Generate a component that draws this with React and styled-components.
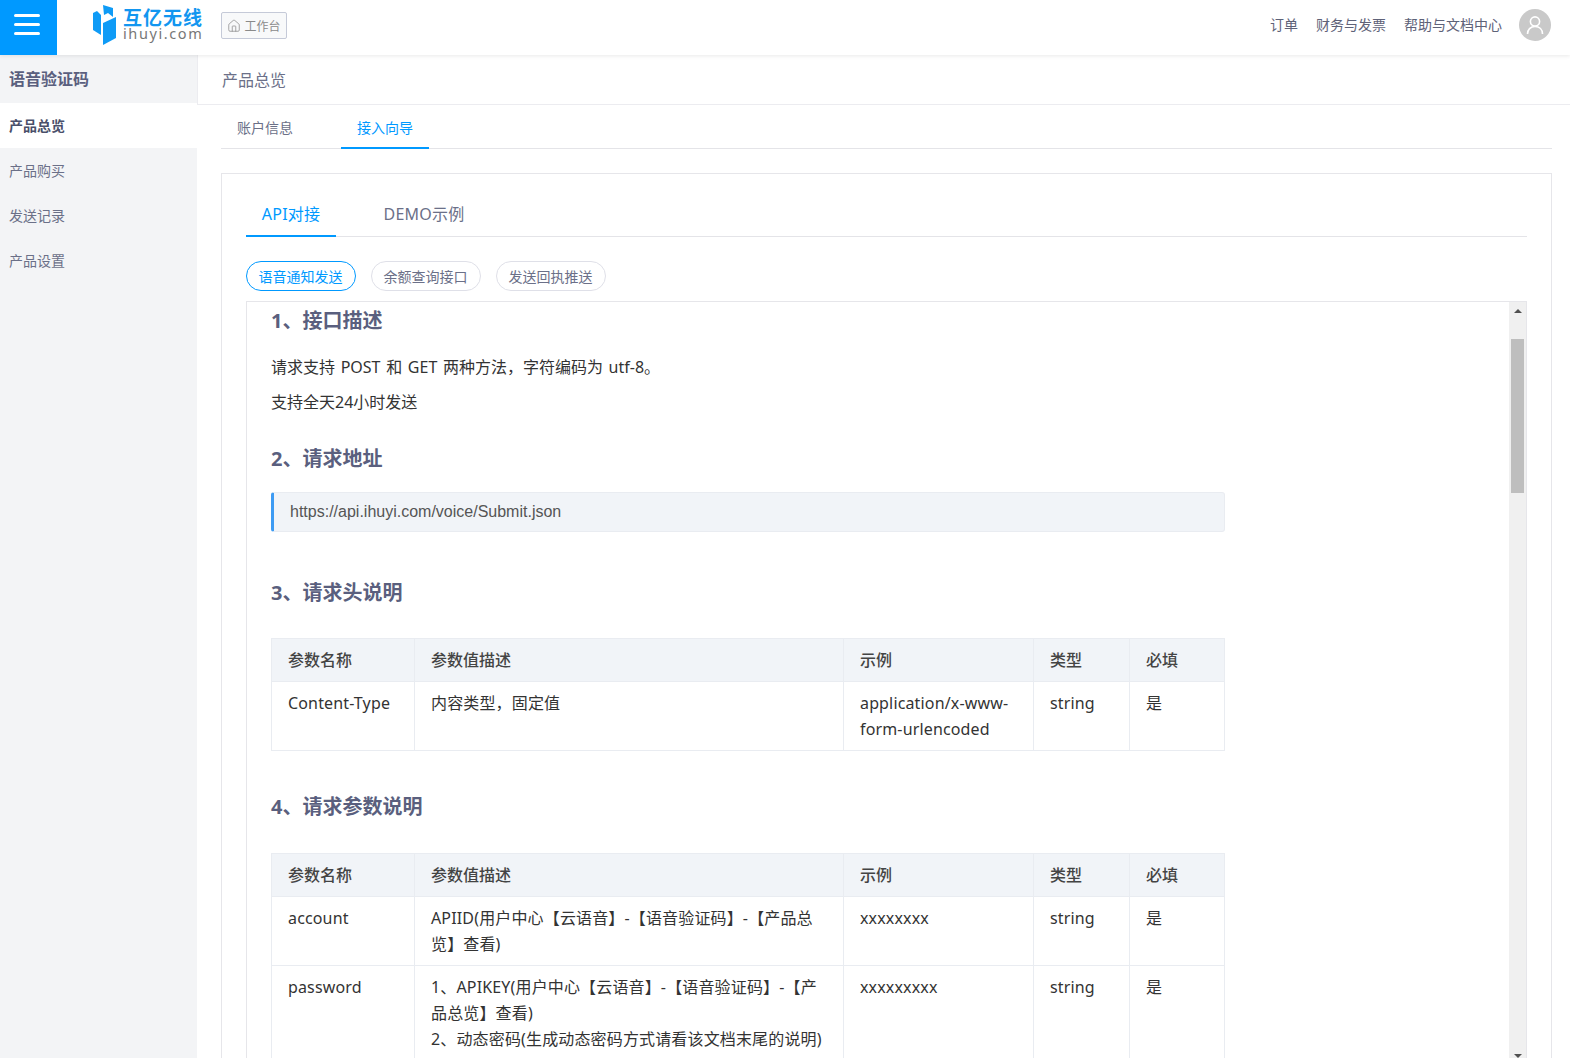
import React from 'react';
import styled, { createGlobalStyle } from 'styled-components';
import { Home } from 'lucide-react';

const Global = createGlobalStyle`
  html, body { margin: 0; padding: 0; height: 100%; overflow: hidden; background: #fff; }
  body { font-family: "Noto Sans", "Noto Sans CJK SC", sans-serif; color: #333; }
  * { box-sizing: border-box; }
`;
const Page = styled.div`width:1570px;height:1058px;display:flex;flex-direction:column;overflow:hidden;`;
const Header = styled.header`height:55px;flex:none;display:flex;align-items:flex-start;background:#fff;box-shadow:0 1px 4px rgba(0,0,0,.09);position:relative;z-index:2;`;
const MenuButton = styled.div`width:57px;height:55px;background:#0099ff;display:flex;flex-direction:column;justify-content:center;align-items:center;gap:6px;padding:0 3px 6px 0;`;
const MenuLine = styled.span`width:26px;height:3px;border-radius:2px;background:#fff;`;
const Logo = styled.div`display:flex;align-items:flex-start;margin-left:36px;width:128px;gap:7px;padding-top:5px;`;
const LogoWords = styled.div`display:flex;flex-direction:column;align-items:flex-start;padding-top:5px;`;
const LogoCn = styled.span`font-size:19px;line-height:16px;font-weight:700;color:#1296f0;letter-spacing:1px;white-space:nowrap;`;
const LogoEn = styled.span`font-family:"Noto Sans",sans-serif;font-size:14.5px;line-height:14px;color:#777;letter-spacing:1.6px;white-space:nowrap;`;
const WorkButton = styled.div`margin-top:12px;width:66px;height:27px;border:1px solid #c5cad8;border-radius:2px;background:#f8f9fa;display:flex;align-items:center;justify-content:center;gap:3px;font-size:12px;color:#8a8a8a;`;
const HeaderRight = styled.div`margin-left:auto;display:flex;align-items:center;padding:9px 19px 0 0;`;
const TopLink = styled.span`font-size:14px;color:#5e6278;padding-bottom:2px;margin-right:${p=>p.$last?17:18}px;white-space:nowrap;`;
const Avatar = styled.div`width:32px;height:32px;border-radius:50%;background:#c9c9c9;display:flex;align-items:center;justify-content:center;`;
const Body = styled.div`flex:1;min-height:0;display:flex;`;
const Sidebar = styled.aside`width:197px;flex:none;background:#f3f4f6;`;
const SideTitle = styled.div`height:48px;padding:0 0 3px 9px;display:flex;align-items:center;font-size:16px;font-weight:700;color:#5a5f7e;`;
const SideItem = styled.div`height:45px;padding:0 0 1px 9px;display:flex;align-items:center;font-size:14px;color:${p=>p.$active?'#4a4f6a':'#6b7088'};font-weight:${p=>p.$active?700:400};background:${p=>p.$active?'#fff':'transparent'};`;
const Main = styled.main`flex:1;min-width:0;display:flex;flex-direction:column;`;
const Crumb = styled.div`height:50px;flex:none;padding:0 0 2px 24px;display:flex;align-items:center;font-size:16px;color:#6b7088;border-bottom:1px solid #ececf0;border-left:1px solid #ececf0;`;
const TabBar = styled.div`margin:0 18px 0 24px;height:44px;flex:none;display:flex;border-bottom:1px solid #e4e4e8;`;
const TopTab = styled.div`width:${p=>p.$w}px;height:44px;padding-top:${p=>p.$active?2:0}px;display:flex;align-items:center;justify-content:center;font-size:14px;color:${p=>p.$active?'#0099ff':'#6b7088'};border-bottom:${p=>p.$active?'2px solid #0099ff':'none'};`;
const Card = styled.section`margin:24px 18px 0 24px;flex:1;min-height:0;border:1px solid #e6e6ea;border-bottom:none;padding:16px 24px 0;display:flex;flex-direction:column;`;
const DocTabs = styled.div`height:47px;flex:none;display:flex;border-bottom:1px solid #e4e4e8;`;
const DocTab = styled.div`width:${p=>p.$w}px;margin-right:${p=>p.$gap||0}px;height:47px;padding-bottom:${p=>p.$active?0:2}px;letter-spacing:.2px;display:flex;align-items:center;justify-content:center;font-size:16px;color:${p=>p.$active?'#0099ff':'#6b7088'};border-bottom:${p=>p.$active?'2px solid #0099ff':'none'};`;
const Pills = styled.div`margin-top:24px;height:30px;flex:none;display:flex;gap:15px;`;
const Pill = styled.div`width:110px;height:30px;border-radius:15px;padding-right:1px;display:flex;align-items:center;justify-content:center;font-size:14px;color:${p=>p.$active?'#0099ff':'#6b7088'};border:1px solid ${p=>p.$active?'#0099ff':'#dfe0e8'};`;
const DocBox = styled.div`margin-top:10px;flex:1;min-height:0;display:flex;border:1px solid #e6e6ea;border-bottom:none;overflow:hidden;`;
const DocContent = styled.div`flex:1;min-width:0;padding:0 0 0 24px;overflow:hidden;`;
const Heading = styled.h2`margin:${p=>p.$top}px 0 0;font-size:20px;line-height:36px;font-weight:700;color:#5a5f7e;`;
const Para = styled.p`margin:${p=>p.$top||0}px 0 0;font-size:16px;line-height:34px;word-spacing:1.5px;color:#333;`;
const UrlBox = styled.div`margin-top:15px;width:954px;height:40px;background:#f1f4f8;border:1px solid #e9ecf1;border-left:3px solid #3d9bf3;border-radius:3px;padding-left:16px;display:flex;align-items:center;font-family:"Liberation Sans",sans-serif;font-size:16px;color:#555;`;
const Table = styled.table`margin-top:${p=>p.$top}px;width:953px;table-layout:fixed;border-collapse:collapse;font-size:16px;line-height:26px;color:#333;`;
const Th = styled.th`height:43px;padding:0 16px;background:#f1f4f8;border:1px solid #e9ecf1;text-align:left;font-weight:500;color:#444;`;
const Td = styled.td`padding:8px 14px 8px 16px;border:1px solid #e9ecf1;vertical-align:top;letter-spacing:.15px;`;
const Scrollbar = styled.div`width:17px;flex:none;background:#f0f0f0;display:flex;flex-direction:column;align-items:center;`;
const ArrowUp = styled.span`margin-top:7px;width:0;height:0;border-left:4px solid transparent;border-right:4px solid transparent;border-bottom:4px solid #505050;`;
const ArrowDown = styled.span`margin-top:auto;width:0;height:0;border-left:4px solid transparent;border-right:4px solid transparent;border-top:4px solid #505050;`;
const Thumb = styled.div`margin-top:26px;width:13px;height:154px;background:#bebebe;`;
const Wrap = styled.span`display:block;max-width:385px;`;

const Cols = () => (
  <colgroup>
    <col style={{width:143}}/><col style={{width:429}}/><col style={{width:190}}/><col style={{width:96}}/><col style={{width:95}}/>
  </colgroup>
);
const HeadRow = () => (
  <thead><tr><Th>参数名称</Th><Th>参数值描述</Th><Th>示例</Th><Th>类型</Th><Th>必填</Th></tr></thead>
);

export default function App() {
  return (
    <Page>
      <Global/>
      <Header>
        <MenuButton><MenuLine/><MenuLine/><MenuLine/></MenuButton>
        <Logo>
          <svg width="23" height="40" viewBox="0 0 23 40" fill="#0f9bf6">
            <path d="M0 8 L4 6 L8 10 V30 L0 25 Z"/>
            <path d="M10 0 L20 3 V12 L15 8 L11 10 Z"/>
            <path d="M10 18 L23 12 V33 L10 40 Z"/>
          </svg>
          <LogoWords>
            <LogoCn>互亿无线</LogoCn>
            <LogoEn>ihuyi.com</LogoEn>
          </LogoWords>
        </Logo>
        <WorkButton><Home size={14} strokeWidth={1.3}/>工作台</WorkButton>
        <HeaderRight>
          <TopLink>订单</TopLink>
          <TopLink>财务与发票</TopLink>
          <TopLink $last>帮助与文档中心</TopLink>
          <Avatar>
            <svg width="20" height="20" viewBox="0 0 20 20" fill="none" stroke="#fff" strokeWidth="1.6">
              <circle cx="10" cy="6.5" r="4.6"/>
              <path d="M2.5 19c0-4.5 3-7.5 7.5-7.5s7.5 3 7.5 7.5"/>
            </svg>
          </Avatar>
        </HeaderRight>
      </Header>
      <Body>
        <Sidebar>
          <SideTitle>语音验证码</SideTitle>
          <SideItem $active>产品总览</SideItem>
          <SideItem>产品购买</SideItem>
          <SideItem>发送记录</SideItem>
          <SideItem>产品设置</SideItem>
        </Sidebar>
        <Main>
          <Crumb>产品总览</Crumb>
          <TabBar>
            <TopTab $w={88}>账户信息</TopTab>
            <TopTab $w={32}/>
            <TopTab $w={88} $active>接入向导</TopTab>
          </TabBar>
          <Card>
            <DocTabs>
              <DocTab $w={90} $gap={36} $active>API对接</DocTab>
              <DocTab $w={104}>DEMO示例</DocTab>
            </DocTabs>
            <Pills>
              <Pill $active>语音通知发送</Pill>
              <Pill>余额查询接口</Pill>
              <Pill>发送回执推送</Pill>
            </Pills>
            <DocBox>
              <DocContent>
                <Heading $top={1}>1、接口描述</Heading>
                <Para $top={11}>请求支持 POST 和 GET 两种方法，字符编码为 utf-8。</Para>
                <Para $top={1}>支持全天24小时发送</Para>
                <Heading $top={22}>2、请求地址</Heading>
                <UrlBox>https://api.ihuyi.com/voice/Submit.json</UrlBox>
                <Heading $top={43}>3、请求头说明</Heading>
                <Table $top={27}>
                  <Cols/><HeadRow/>
                  <tbody>
                    <tr><Td>Content-Type</Td><Td>内容类型，固定值</Td><Td>application/x-www-form-urlencoded</Td><Td>string</Td><Td>是</Td></tr>
                  </tbody>
                </Table>
                <Heading $top={38}>4、请求参数说明</Heading>
                <Table $top={28}>
                  <Cols/><HeadRow/>
                  <tbody>
                    <tr><Td>account</Td><Td><Wrap>APIID(用户中心【云语音】-【语音验证码】-【产品总览】查看)</Wrap></Td><Td>xxxxxxxx</Td><Td>string</Td><Td>是</Td></tr>
                    <tr><Td>password</Td><Td>1、APIKEY(用户中心【云语音】-【语音验证码】-【产品总览】查看)<br/>2、动态密码(生成动态密码方式请看该文档末尾的说明)</Td><Td>xxxxxxxxx</Td><Td>string</Td><Td>是</Td></tr>
                  </tbody>
                </Table>
              </DocContent>
              <Scrollbar>
                <ArrowUp/>
                <Thumb/>
                <ArrowDown/>
              </Scrollbar>
            </DocBox>
          </Card>
        </Main>
      </Body>
    </Page>
  );
}
